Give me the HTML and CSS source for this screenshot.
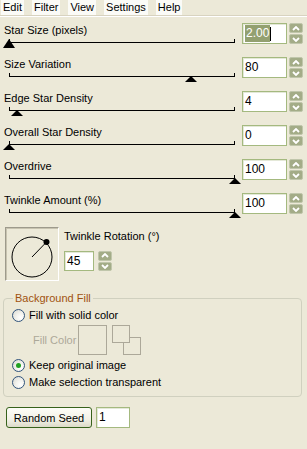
FILE: index.html
```html
<!DOCTYPE html>
<html>
<head>
<meta charset="utf-8">
<link rel="stylesheet" href="styles.css">
</head>
<body>
<div class="menubar">
  <span class="menu-item">Edit</span>
  <span class="menu-item">Filter</span>
  <span class="menu-item">View</span>
  <span class="menu-item">Settings</span>
  <span class="menu-item">Help</span>
</div>

<div class="params">
  <div class="param">
    <div class="param-main">
      <div class="param-label">Star Size (pixels)</div>
      <div class="track"><span class="thumb thumb-focus" style="left:0%"></span></div>
    </div>
    <div class="edit"><span class="sel">2.00</span><span class="caret"></span></div>
    <div class="spin">
      <span class="spin-btn"><svg width="8" height="5" viewBox="0 0 8 5"><path d="M1 4 L4 1 L7 4" fill="none" stroke="#fff" stroke-width="1.8"/></svg></span>
      <span class="spin-btn"><svg width="8" height="5" viewBox="0 0 8 5"><path d="M1 1 L4 4 L7 1" fill="none" stroke="#fff" stroke-width="1.8"/></svg></span>
    </div>
  </div>

  <div class="param">
    <div class="param-main">
      <div class="param-label">Size Variation</div>
      <div class="track"><span class="thumb" style="left:80.5%"></span></div>
    </div>
    <div class="edit">80</div>
    <div class="spin">
      <span class="spin-btn"><svg width="8" height="5" viewBox="0 0 8 5"><path d="M1 4 L4 1 L7 4" fill="none" stroke="#fff" stroke-width="1.8"/></svg></span>
      <span class="spin-btn"><svg width="8" height="5" viewBox="0 0 8 5"><path d="M1 1 L4 4 L7 1" fill="none" stroke="#fff" stroke-width="1.8"/></svg></span>
    </div>
  </div>

  <div class="param">
    <div class="param-main">
      <div class="param-label">Edge Star Density</div>
      <div class="track"><span class="thumb" style="left:3.5%"></span></div>
    </div>
    <div class="edit">4</div>
    <div class="spin">
      <span class="spin-btn"><svg width="8" height="5" viewBox="0 0 8 5"><path d="M1 4 L4 1 L7 4" fill="none" stroke="#fff" stroke-width="1.8"/></svg></span>
      <span class="spin-btn"><svg width="8" height="5" viewBox="0 0 8 5"><path d="M1 1 L4 4 L7 1" fill="none" stroke="#fff" stroke-width="1.8"/></svg></span>
    </div>
  </div>

  <div class="param">
    <div class="param-main">
      <div class="param-label">Overall Star Density</div>
      <div class="track"><span class="thumb" style="left:0%"></span></div>
    </div>
    <div class="edit">0</div>
    <div class="spin">
      <span class="spin-btn"><svg width="8" height="5" viewBox="0 0 8 5"><path d="M1 4 L4 1 L7 4" fill="none" stroke="#fff" stroke-width="1.8"/></svg></span>
      <span class="spin-btn"><svg width="8" height="5" viewBox="0 0 8 5"><path d="M1 1 L4 4 L7 1" fill="none" stroke="#fff" stroke-width="1.8"/></svg></span>
    </div>
  </div>

  <div class="param">
    <div class="param-main">
      <div class="param-label">Overdrive</div>
      <div class="track"><span class="thumb" style="left:100%"></span></div>
    </div>
    <div class="edit">100</div>
    <div class="spin">
      <span class="spin-btn"><svg width="8" height="5" viewBox="0 0 8 5"><path d="M1 4 L4 1 L7 4" fill="none" stroke="#fff" stroke-width="1.8"/></svg></span>
      <span class="spin-btn"><svg width="8" height="5" viewBox="0 0 8 5"><path d="M1 1 L4 4 L7 1" fill="none" stroke="#fff" stroke-width="1.8"/></svg></span>
    </div>
  </div>

  <div class="param">
    <div class="param-main">
      <div class="param-label">Twinkle Amount (%)</div>
      <div class="track"><span class="thumb" style="left:100%"></span></div>
    </div>
    <div class="edit">100</div>
    <div class="spin">
      <span class="spin-btn"><svg width="8" height="5" viewBox="0 0 8 5"><path d="M1 4 L4 1 L7 4" fill="none" stroke="#fff" stroke-width="1.8"/></svg></span>
      <span class="spin-btn"><svg width="8" height="5" viewBox="0 0 8 5"><path d="M1 1 L4 4 L7 1" fill="none" stroke="#fff" stroke-width="1.8"/></svg></span>
    </div>
  </div>
</div>

<div class="rotation">
  <div class="dial">
    <svg width="50" height="50" viewBox="0 0 50 50">
      <circle cx="25" cy="28" r="20" fill="none" stroke="#000" stroke-width="1"/>
      <line x1="25" y1="28" x2="39.5" y2="13" stroke="#000" stroke-width="1"/>
      <circle cx="39.5" cy="13" r="3" fill="#000"/>
    </svg>
  </div>
  <div class="rotation-side">
    <div class="rotation-label">Twinkle Rotation (°)</div>
    <div class="rotation-input">
      <div class="edit edit-small">45</div>
      <div class="spin spin-small">
        <span class="spin-btn"><svg width="8" height="5" viewBox="0 0 8 5"><path d="M1 4 L4 1 L7 4" fill="none" stroke="#fff" stroke-width="1.8"/></svg></span>
        <span class="spin-btn"><svg width="8" height="5" viewBox="0 0 8 5"><path d="M1 1 L4 4 L7 1" fill="none" stroke="#fff" stroke-width="1.8"/></svg></span>
      </div>
    </div>
  </div>
</div>

<fieldset class="group">
  <legend class="group-caption">Background Fill</legend>
  <div class="radio-row"><span class="radio"></span>Fill with solid color</div>
  <div class="fill-row">
    <span class="fill-label">Fill Color</span>
    <span class="swatch-big"></span>
    <span class="swatch-pair">
      <span class="swatch-small swatch-back"></span>
      <span class="swatch-small swatch-front"></span>
    </span>
  </div>
  <div class="radio-row"><span class="radio radio-checked"></span>Keep original image</div>
  <div class="radio-row"><span class="radio"></span>Make selection transparent</div>
</fieldset>

<div class="seed-row">
  <button class="btn">Random Seed</button>
  <div class="edit edit-seed">1</div>
</div>
</body>
</html>
```

FILE: styles.css
```css
* { box-sizing: border-box; }

body {
  margin: 0;
  background: #ece9d8;
  font-family: "Liberation Sans", Arial, sans-serif;
  font-size: 11px;
  color: #000;
  width: 307px;
  height: 449px;
  overflow: hidden;
}

/* menu */
.menubar {
  height: 16px;
  display: flex;
  align-items: flex-start;
  gap: 8px;
  padding-left: 1px;
  border-bottom: 1px solid #d8d3c0;
  box-shadow: 0 1px 0 #fff;
}
.menu-item {
  background: #fbfbf7;
  padding: 1px 2px 1px 2px;
  line-height: 13px;
}

/* parameter rows */
.params {
  padding-top: 2px;
}
.param {
  height: 34px;
  display: grid;
  grid-template-columns: 1fr 45px 14px;
  column-gap: 2px;
  padding-left: 4px;
  padding-right: 4px;
  align-items: start;
}
.param-main {
  padding-top: 6px;
  padding-right: 5px;
}
.param-label {
  line-height: 13px;
  white-space: nowrap;
}
.track {
  position: relative;
  margin-left: 5px;
  margin-top: 5px;
  height: 8px;
  border-top: 1px solid #000;
}
.track::before,
.track::after {
  content: "";
  position: absolute;
  top: -4px;
  width: 1px;
  height: 4px;
  background: #000;
}
.track::before { left: 0; }
.track::after { right: 0; }

.thumb {
  position: absolute;
  top: -1px;
  margin-left: -6px;
  width: 0;
  height: 0;
  border-left: 6px solid transparent;
  border-right: 6px solid transparent;
  border-bottom: 6px solid #000;
}
.thumb-focus {
  top: -4px;
  border-bottom-width: 9px;
}

/* edit boxes */
.edit {
  margin-top: 5px;
  height: 21px;
  background: #fff;
  border: 1px solid #a4b97f;
  box-shadow: inset 1px 1px 0 #e4e8d8;
  padding-left: 2px;
  line-height: 19px;
  font-size: 12px;
  display: flex;
  align-items: center;
}
.sel {
  background: #93a070;
  color: #fff;
  line-height: 17px;
  padding: 0 1px;
}
.caret {
  width: 1px;
  height: 14px;
  background: #000;
}

/* spin buttons */
.spin {
  margin-top: 5px;
  height: 21px;
  display: flex;
  flex-direction: column;
  gap: 1px;
}
.spin-btn {
  flex: 1;
  background: #a3ac87;
  border: 1px solid #c0c6ab;
  border-radius: 2px;
  display: flex;
  align-items: center;
  justify-content: center;
}
.spin-btn svg { display: block; }

/* rotation */
.rotation {
  display: flex;
  gap: 5px;
  padding: 5px 0 0 5px;
}
.dial {
  width: 54px;
  height: 54px;
  border: 1px solid;
  border-color: #9d9a8c #fff #fff #9d9a8c;
  box-shadow: inset 1px 1px 0 #c7c3b0;
  padding: 1px;
}
.dial svg { display: block; }
.rotation-side {
  display: flex;
  flex-direction: column;
}
.rotation-label {
  margin-top: 3px;
  line-height: 13px;
}
.rotation-input {
  display: flex;
  gap: 4px;
  margin-top: 8px;
}
.edit-small {
  margin-top: 0;
  width: 30px;
  height: 20px;
}
.spin-small {
  margin-top: 0;
  width: 14px;
  height: 20px;
}

/* group box */
.group {
  margin: 11px 5px 0 3px;
  padding: 0 0 4px 8px;
  border: 1px solid #d0d0bf;
  border-radius: 4px;
  height: 105px;
}
.group-caption {
  color: #a0520f;
  padding: 0 2px;
  margin-left: 1px;
  line-height: 13px;
}
.radio-row {
  display: flex;
  align-items: center;
  gap: 4px;
  height: 17px;
  line-height: 13px;
}
.group .radio-row:first-of-type { margin-top: 2px; }
.radio {
  width: 13px;
  height: 13px;
  border-radius: 50%;
  border: 1px solid #31547c;
  background: radial-gradient(circle at 70% 70%, #ffffff 0%, #f3f3ee 40%, #d6d6ce 100%);
  position: relative;
  flex: none;
}
.radio-checked::after {
  content: "";
  position: absolute;
  left: 3px;
  top: 3px;
  width: 5px;
  height: 5px;
  border-radius: 50%;
  background: #21a121;
}
.fill-row {
  display: flex;
  align-items: flex-start;
  padding-left: 21px;
  height: 32px;
  margin-top: 1px;
}
.fill-label {
  color: #aca899;
  margin-top: 9px;
  width: 45px;
  white-space: nowrap;
}
.swatch-big {
  width: 29px;
  height: 30px;
  border: 1px solid #aca899;
}
.swatch-pair {
  position: relative;
  width: 30px;
  height: 30px;
  margin-left: 5px;
}
.swatch-small {
  position: absolute;
  width: 18px;
  height: 18px;
  border: 1px solid #aca899;
  background: #ece9d8;
}
.swatch-back { left: 11px; top: 12px; }
.swatch-front { left: 0; top: 0; }

/* bottom row */
.seed-row {
  display: flex;
  gap: 4px;
  padding-left: 6px;
  margin-top: 10px;
}
.btn {
  width: 86px;
  height: 21px;
  font-family: "Liberation Sans", Arial, sans-serif;
  font-size: 11px;
  color: #000;
  border: 1px solid #37621b;
  border-radius: 3px;
  background: linear-gradient(#fdfdf8, #f2f1e6 60%, #dcdac8);
  padding: 0;
}
.edit-seed {
  margin-top: 0;
  width: 34px;
  height: 21px;
}
```
